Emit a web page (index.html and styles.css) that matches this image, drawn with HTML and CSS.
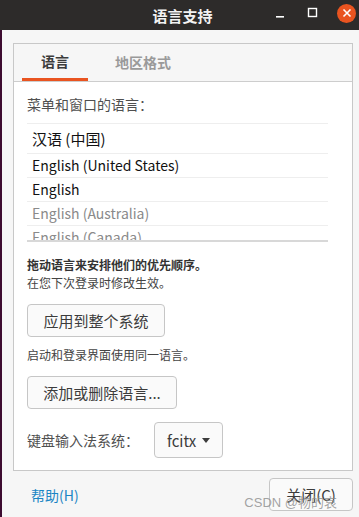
FILE: index.html
```html
<!DOCTYPE html>
<html lang="zh">
<head>
    <meta charset="UTF-8">
    <title>语言支持</title>
    <link rel="stylesheet" href="styles.css">
</head>
<body>
    <div class="titlebar">
        <span class="title">语言支持</span>
        <div class="wm-buttons">
            <span class="wm-btn">
                <svg width="12" height="12" viewBox="0 0 12 12"><rect x="1" y="9" width="8" height="1.6" fill="#fff"/></svg>
            </span>
            <span class="wm-btn">
                <svg width="12" height="12" viewBox="0 0 12 12"><rect x="1.5" y="1.5" width="8" height="8" fill="none" stroke="#fff" stroke-width="1.4"/></svg>
            </span>
            <span class="wm-btn close">
                <svg width="10" height="10" viewBox="0 0 10 10"><path d="M1.5 1.5 L8.5 8.5 M8.5 1.5 L1.5 8.5" stroke="#fff" stroke-width="1.6"/></svg>
            </span>
        </div>
    </div>

    <div class="window">
        <div class="notebook">
            <div class="tabs">
                <span class="tab active">语言</span>
                <span class="tab">地区格式</span>
            </div>
            <div class="page">
                <div class="label">菜单和窗口的语言：</div>
                <ul class="lang-list">
                    <li class="first">汉语 (中国)</li>
                    <li>English (United States)</li>
                    <li>English</li>
                    <li class="dim">English (Australia)</li>
                    <li class="dim">English (Canada)</li>
                </ul>
                <div class="hint bold">拖动语言来安排他们的优先顺序。</div>
                <div class="hint">在您下次登录时修改生效。</div>
                <button class="btn btn-apply">应用到整个系统</button>
                <div class="hint">启动和登录界面使用同一语言。</div>
                <button class="btn btn-add">添加或删除语言...</button>
                <div class="input-row">
                    <span class="label">键盘输入法系统：</span>
                    <button class="btn combo">fcitx <span class="arrow"></span></button>
                </div>
            </div>
        </div>
        <div class="footer">
            <a class="help" href="#">帮助(H)</a>
            <button class="btn btn-close">关闭(C)</button>
            <span class="watermark">CSDN @物的哀</span>
        </div>
    </div>
</body>
</html>
```

FILE: styles.css
```css
body {
    margin: 0;
    width: 359px;
    height: 517px;
    overflow: hidden;
    background: #f6f6f6;
    font-family: "Noto Sans CJK SC", "Noto Sans", sans-serif;
    color: #3c3c3c;
}
.titlebar {
    height: 30px;
    background: #2d2b2a;
    position: relative;
    display: flex;
    align-items: center;
    justify-content: center;
}
.title {
    color: #f2f2f2;
    font-size: 15px;
    font-weight: bold;
    margin-left: 6px;
}
.wm-buttons {
    position: absolute;
    right: 3px;
    top: 3px;
    display: flex;
    align-items: center;
    gap: 12px;
}
.wm-btn {
    width: 20px;
    height: 20px;
    display: flex;
    align-items: center;
    justify-content: center;
}
.wm-btn.close {
    background: #e95420;
    border-radius: 50%;
    width: 19px;
    height: 19px;
    margin-left: 2px;
}
.window {
    border-left: 2px solid #3d0c30;
    height: 487px;
    padding: 13px 6px 0 11px;
    box-sizing: border-box;
}
.notebook {
    border: 1px solid #c8c8c8;
    height: 428px;
    box-sizing: border-box;
    display: flex;
    flex-direction: column;
}
.tabs {
    display: flex;
    height: 37px;
    border-bottom: 1px solid #cdcdcd;
    padding-left: 8px;
    background: #f6f6f6;
}
.tab {
    font-size: 14px;
    font-weight: bold;
    color: #9a9a9a;
    padding: 0 19px;
    text-align: center;
    line-height: 36px;
    margin-right: 8px;
}
.tab.active {
    color: #3c3c3c;
    line-height: 34px;
    border-bottom: 3px solid #e95420;
}
.page {
    background: #fff;
    flex: 1;
    padding: 12px 12px 0 13px;
}
.label {
    font-size: 14px;
    color: #4f4f4f;
}
.lang-list {
    list-style: none;
    margin: 9px 12px 0 0;
    padding: 0;
    border-top: 1px solid #eeeeee;
    height: 116px;
    overflow: hidden;
    border-bottom: 2px solid #d8d8d8;
}
.lang-list li {
    font-size: 14px;
    color: #111;
    height: 23px;
    line-height: 22px;
    padding-left: 5px;
    border-bottom: 1px solid #eeeeee;
}
.lang-list li.first {
    height: 29px;
    line-height: 30px;
    font-size: 15px;
}
.lang-list li.dim {
    color: #8a8a8a;
}
.hint {
    font-size: 12px;
    color: #444;
    line-height: 18px;
}
.hint.bold {
    font-weight: bold;
    color: #333;
    margin-top: 14px;
}
.btn {
    font-family: inherit;
    background: #fafafa;
    border: 1px solid #c6c6c6;
    border-radius: 4px;
    color: #3c3c3c;
    font-size: 15px;
    height: 33px;
    padding: 0;
    white-space: nowrap;
    cursor: pointer;
}
.btn-apply {
    display: block;
    width: 138px;
    margin: 12px 0 9px;
}
.btn-add {
    display: block;
    width: 150px;
    margin: 12px 0 13px;
}
.input-row {
    display: flex;
    align-items: center;
    gap: 15px;
}
.combo {
    height: 36px;
    width: 69px;
    padding: 0 10px 0 12px;
    display: flex;
    align-items: center;
    gap: 6px;
}
.arrow {
    width: 0;
    height: 0;
    border-left: 4px solid transparent;
    border-right: 4px solid transparent;
    border-top: 5px solid #3c3c3c;
}
.footer {
    position: relative;
    display: flex;
    justify-content: space-between;
    align-items: center;
    padding: 7px 0 0 18px;
}
.help {
    color: #1b85c4;
    font-size: 14px;
    text-decoration: none;
}
.btn-close {
    width: 84px;
    height: 33px;
}
.watermark {
    position: absolute;
    right: 16px;
    top: 21px;
    font-family: "Liberation Sans", "Noto Sans CJK SC", sans-serif;
    font-size: 13px;
    color: rgba(140, 140, 140, 0.8);
}
```
